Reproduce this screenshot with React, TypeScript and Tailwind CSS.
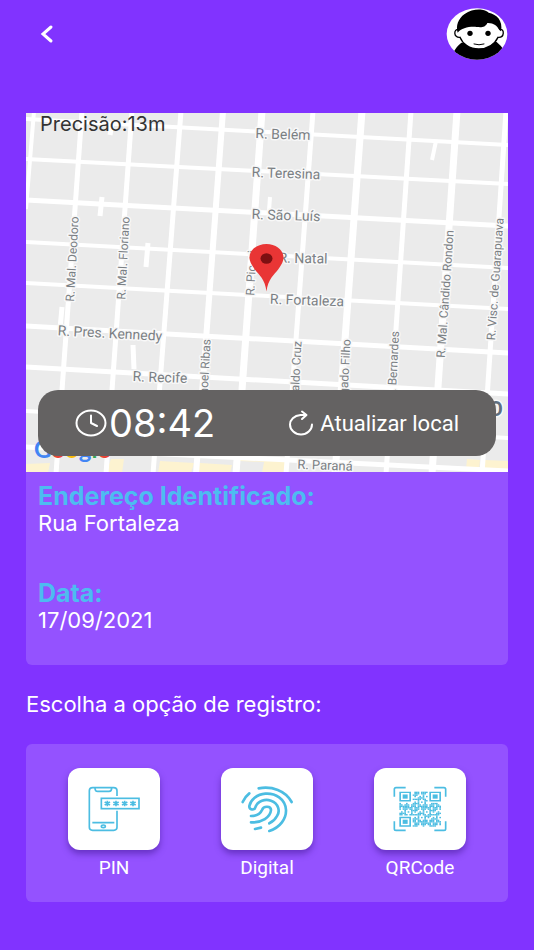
import React from "react";

interface StreetLabel {
  text: string;
  x: number;
  y: number;
  angle: number;
  size: number;
}

interface RegisterOption {
  label: string;
  icon: React.ReactNode;
}

// [x1, y1, x2, y2, width]
const streets: number[][] = [
  [8, -2, 0, 96, 4],
  [56, -2, 30, 361, 5],
  [106, -2, 80, 361, 5],
  [155, -2, 127, 361, 5],
  [197, -2, 170, 361, 6],
  [236, -2, 210, 361, 7],
  [287, -2, 260, 361, 5],
  [336, -2, 309, 361, 7],
  [385, -2, 360, 361, 5],
  [431, -2, 406, 361, 7],
  [480, -2, 456, 361, 5],
  [-2, 6, 484, 32, 4],
  [-2, 46, 484, 71, 4],
  [-2, 87, 484, 113, 5],
  [-2, 129, 484, 155, 4],
  [-2, 170, 484, 196, 4],
  [-2, 213, 484, 240, 5],
  [-2, 254, 484, 281, 5],
  [-2, 298, 484, 325, 4],
  [-2, 334, 484, 358, 5],
  [86, 10, 84, 22, 5],
  [76, 84, 74, 103, 5],
  [122, 130, 120, 154, 5],
  [36, 194, 34, 216, 5],
  [107, 232, 108, 256, 5],
  [410, 28, 406, 47, 4],
  [244, 84, 243, 98, 4],
];

const buildings = [
  "0,351 24,350 22,360 0,360",
  "85,346 98,346 96,360 80,360",
  "134,348 168,350 165,360 132,360",
  "174,350 206,352 204,360 171,360",
  "214,343 260,345 259,350 214,348",
  "239,344 260,345 259,360 236,360",
  "441,346 454,347 453,357 440,356",
  "459,347 484,348 484,358 458,357",
];

const streetLabels: StreetLabel[] = [
  { text: "R. Belém", x: 257, y: 21, angle: 2, size: 14 },
  { text: "R. Teresina", x: 260, y: 60, angle: 2, size: 14 },
  { text: "R. São Luís", x: 260, y: 102, angle: 2, size: 14 },
  { text: "R. Natal", x: 277, y: 145, angle: 1, size: 14 },
  { text: "R. Fortaleza", x: 281, y: 187, angle: 2, size: 14 },
  { text: "R. Pres. Kennedy", x: 84, y: 220, angle: 3, size: 14 },
  { text: "R. Recife", x: 134, y: 264, angle: 2, size: 14 },
  { text: "R. Paraná", x: 299, y: 352, angle: 2, size: 13 },
  { text: "R. Mal. Deodoro", x: 46, y: 146, angle: -87, size: 12 },
  { text: "R. Mal. Floriano", x: 97, y: 145, angle: -87, size: 12 },
  { text: "R. Pic. xi", x: 225, y: 160, angle: -87, size: 12 },
  { text: "R. Manoel Ribas", x: 178, y: 269, angle: -87, size: 12 },
  { text: "R. Osvaldo Cruz", x: 269, y: 270, angle: -87, size: 12 },
  { text: "R. Salgado Filho", x: 318, y: 269, angle: -87, size: 12 },
  { text: "R. Bernardes", x: 367, y: 252, angle: -87, size: 12 },
  { text: "R. Mal. Cândido Rondon", x: 419, y: 181, angle: -86, size: 12 },
  { text: "R. Visc. de Guarapuava", x: 469, y: 166, angle: -86, size: 12 },
];

const StreetMap: React.FC = () => (
  <svg viewBox="0 0 482 359" className="block w-full" role="img" aria-label="Mapa">
    <rect width="482" height="359" fill="#ebebeb" />
    {buildings.map((points) => (
      <polygon key={points} points={points} fill="#fdf3d0" />
    ))}
    {streets.map(([x1, y1, x2, y2, width], i) => (
      <line
        key={i}
        x1={x1}
        y1={y1}
        x2={x2}
        y2={y2}
        stroke="#fff"
        strokeWidth={width}
      />
    ))}
    <g
      fontFamily="Roboto, sans-serif"
      textAnchor="middle"
      fill="#7b8084"
      stroke="#f8f8f8"
      strokeWidth="3"
      strokeLinejoin="round"
      paintOrder="stroke"
    >
      {streetLabels.map(({ text, x, y, angle, size }) => (
        <text
          key={text}
          fontSize={size}
          transform={`translate(${x} ${y}) rotate(${angle})`}
          dy="0.36em"
        >
          {text}
        </text>
      ))}
      <text x="470" y="303" fontSize="20" fontWeight="700" fill="#5f6f80">
        O
      </text>
    </g>
    <text
      x="8"
      y="345"
      fontFamily="Lato, sans-serif"
      fontSize="24"
      fontWeight="700"
    >
      <tspan fill="#4285f4">G</tspan>
      <tspan fill="#ea4335">o</tspan>
      <tspan fill="#fbbc05">o</tspan>
      <tspan fill="#4285f4">g</tspan>
      <tspan fill="#34a853">l</tspan>
      <tspan fill="#ea4335">e</tspan>
    </text>
    <path
      d="M240.500 178.500C239 166 233 162 228.500 156C225 151 223.500 148 223.500 144.500C223.500 137 231 131 240.500 131S257.500 137 257.500 144.500C257.500 148 256 151 252.500 156C248 162 242 166 240.500 178.500Z"
      fill="#e93535"
    />
    <ellipse cx="240.500" cy="145.500" rx="6" ry="5.200" fill="#7d1012" />
  </svg>
);

const Avatar: React.FC = () => (
  <svg width="62" height="52" viewBox="0 0 186 156" aria-hidden="true">
    <defs>
      <clipPath id="avatar">
        <ellipse cx="93" cy="78" rx="91" ry="77" />
      </clipPath>
    </defs>
    <g clipPath="url(#avatar)">
      <rect width="186" height="156" fill="#fff" />
      <path d="M22 134Q32 114 46 104L152 102Q164 112 174 126L160 156H30Z" fill="#000" />
      <path
        d="M38 64C22 62 22 90 42 88C50 108 70 123 98 123S146 108 156 88C176 90 176 62 162 64L150 40H50Z"
        fill="#fff"
        stroke="#000"
        strokeWidth="4"
      />
      <path
        d="M35 74C29 54 36 32 56 18C72 6 92 3 108 5C118 6 124 10 128 14C150 18 172 36 165 70L160 66C154 54 142 44 124 45C118 59 106 58 92 57C70 55 46 60 35 74Z"
        fill="#000"
      />
      <circle cx="72" cy="76" r="8" fill="#000" />
      <circle cx="126" cy="76" r="8" fill="#000" />
      <path
        d="M84 108Q99 113 114 108"
        fill="none"
        stroke="#000"
        strokeWidth="3"
        strokeLinecap="round"
      />
    </g>
  </svg>
);

const PinIcon: React.FC = () => (
  <svg
    width="54"
    height="46"
    viewBox="0 0 162 138"
    fill="none"
    stroke="#4cbde2"
    strokeWidth="5"
    aria-hidden="true"
  >
    <path d="M90 30V14Q90 5 80 5H17Q7 5 7 14V124Q7 133 17 133H80Q90 133 90 124V74" />
    <path d="M24 5Q24 16 32 16H66Q74 16 74 5M16 110H82" />
    <ellipse cx="49" cy="121" rx="6" ry="4" />
    <rect x="43" y="37" width="113" height="31" />
    {[61, 87, 113, 138].map((x) => (
      <path
        key={x}
        d={`M${x} 44V61M${x - 8} 48L${x + 8} 57M${x - 8} 57L${x + 8} 48`}
      />
    ))}
  </svg>
);

const FingerprintIcon: React.FC = () => (
  <svg
    width="60"
    height="54"
    viewBox="0 0 180 162"
    fill="none"
    stroke="#4cbde2"
    strokeWidth="8"
    strokeLinecap="round"
    strokeLinejoin="round"
    aria-hidden="true"
  >
    <path d="M65 19C105 12 145 25 164 60" />
    <path d="M17 60Q24 44 37 34" />
    <path d="M97 147C130 136 148 110 147 84C145 50 115 33 85 35C58 37 40 55 37 72C36 84 52 86 55 76C62 56 85 50 102 56C125 64 130 88 120 102C115 112 108 119 97 124" />
    <path d="M42 102C62 102 70 96 75 84C80 70 102 72 102 84C100 106 75 122 42 121" />
    <path d="M54 141L72 137" />
  </svg>
);

const isFinder = (x: number, y: number) =>
  (x < 8 && y < 8) || (x > 16 && y < 8) || (x < 8 && y > 16);

const qrModules: number[][] = [];
for (let y = 0; y < 25; y++) {
  for (let x = 0; x < 25; x++) {
    const noise = (x * x * 7 + y * y * 13 + x * y * 5 + x * 3 + y) % 11;
    if (!isFinder(x, y) && noise < 7) qrModules.push([x, y]);
  }
}

const QrIcon: React.FC = () => (
  <svg
    width="54"
    height="46"
    viewBox="0 0 162 138"
    fill="none"
    stroke="#4cbde2"
    aria-hidden="true"
  >
    <path
      d="M4 32V10Q4 5 9 5H38M124 5H153Q158 5 158 10V32M158 106V128Q158 133 153 133H124M38 133H9Q4 133 4 128V106"
      strokeWidth="5"
    />
    <g transform="translate(19 17) scale(5 4.200)" fill="#4cbde2" stroke="none">
      {qrModules.map(([x, y]) => (
        <rect key={`${x}-${y}`} x={x} y={y} width="1" height="1" />
      ))}
      {[
        [0, 0],
        [18, 0],
        [0, 18],
      ].map(([x, y]) => (
        <g key={`${x}-${y}`}>
          <path
            fillRule="evenodd"
            d={`M${x} ${y}h7v7h-7zM${x + 1} ${y + 1}v5h5v-5z`}
          />
          <rect x={x + 2} y={y + 2} width="3" height="3" />
        </g>
      ))}
    </g>
  </svg>
);

const options: RegisterOption[] = [
  { label: "PIN", icon: <PinIcon /> },
  { label: "Digital", icon: <FingerprintIcon /> },
  { label: "QRCode", icon: <QrIcon /> },
];

export default function App() {
  return (
    <div className="min-h-screen bg-[#8133ff] font-['Inter',sans-serif] text-white">
      <header className="flex items-start justify-between px-[26px] pt-2">
        <button type="button" aria-label="Voltar" className="ml-2 mt-3 p-1">
          <svg width="16" height="20" viewBox="0 0 16 20" aria-hidden="true">
            <path
              d="M13 3L5 10L13 17"
              fill="none"
              stroke="#fff"
              strokeWidth="3"
              strokeLinecap="round"
            />
          </svg>
        </button>
        <button type="button" aria-label="Perfil">
          <Avatar />
        </button>
      </header>

      <main className="px-[26px] pt-[53px] pb-12">
        <section className="overflow-hidden rounded-b-md bg-[#9452ff]">
          <div className="relative">
            <StreetMap />
            <p className="absolute left-3.5 top-0 text-xl leading-[22px] text-[#333]">
              Precisão:13m
            </p>
            <div className="absolute inset-x-3 bottom-4 flex h-[66px] items-center justify-between rounded-[20px] bg-[#646262] px-[37px]">
              <div className="flex items-center gap-0.5">
                <svg
                  width="32"
                  height="28"
                  viewBox="0 0 32 28"
                  fill="none"
                  stroke="#fff"
                  strokeWidth="2"
                  strokeLinecap="round"
                  strokeLinejoin="round"
                  aria-hidden="true"
                >
                  <ellipse cx="16" cy="14" rx="14.500" ry="12.500" />
                  <path d="M16 6.500V14L22 17" />
                </svg>
                <time className="text-[38px] leading-10">08:42</time>
              </div>
              <button
                type="button"
                className="flex items-center gap-1.5 font-['Roboto',sans-serif] text-[22px]"
              >
                <svg
                  width="26"
                  height="26"
                  viewBox="0 0 26 26"
                  fill="none"
                  stroke="#fff"
                  strokeWidth="2"
                  strokeLinecap="round"
                  strokeLinejoin="round"
                  aria-hidden="true"
                >
                  <path d="M18 5H12.500C6 5.500 2 10 2 14.500C2 20 7 24.500 13 24.500S24 20 24 14.500" />
                  <path d="M14 1.500L18.500 5L14 9" />
                </svg>
                Atualizar local
              </button>
            </div>
          </div>

          <dl className="px-3 pt-[11px] pb-[31px] text-[22px] leading-[27px]">
            <dt className="text-[25px] leading-[27px] font-bold text-[#4dbcf0]">
              Endereço Identificado:
            </dt>
            <dd>Rua Fortaleza</dd>
            <dt className="mt-[43px] text-[25px] leading-[27px] font-bold text-[#4dbcf0]">
              Data:
            </dt>
            <dd>17/09/2021</dd>
          </dl>
        </section>

        <h2 className="mt-[26px] text-[22px] leading-[27px]">
          Escolha a opção de registro:
        </h2>

        <section className="mt-[26px] flex justify-between rounded-md bg-[#9452ff] px-[42px] pt-6 pb-[22px]">
          {options.map(({ label, icon }) => (
            <button
              key={label}
              type="button"
              className="flex w-[92px] flex-col items-center gap-1.5 font-['Roboto',sans-serif] text-[19px] leading-6"
            >
              <span className="flex h-[82px] w-full items-center justify-center rounded-xl bg-white shadow-[0_4px_6px_rgba(60,20,140,0.5)]">
                {icon}
              </span>
              {label}
            </button>
          ))}
        </section>
      </main>
    </div>
  );
}
